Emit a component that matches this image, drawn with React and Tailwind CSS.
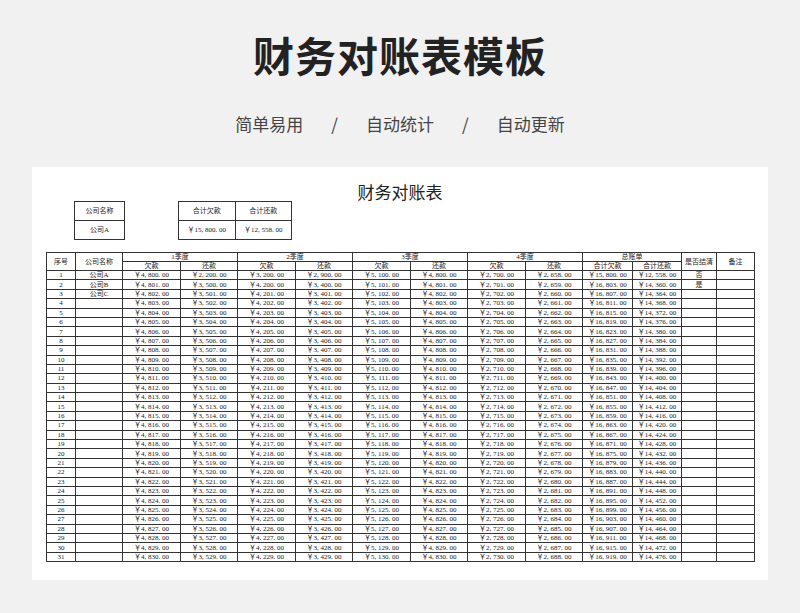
const yen = (n) => "￥" + n.toLocaleString("en-US").replace(",", ", ") + ". 00";

const rows = Array.from({ length: 31 }, (_, k) => {
  const i = k + 1;
  if (i === 1)
    return [1, "公司A", 4800, 2200, 3200, 2900, 5100, 4800, 2700, 2658, 15800, 12558, "否"];
  return [
    i,
    i === 2 ? "公司B" : i === 3 ? "公司C" : "",
    4800 + i - 1,
    3500 + i - 2,
    4200 + i - 2,
    3400 + i - 2,
    5100 + i - 1,
    4800 + i - 1,
    2700 + i - 1,
    2658 + i - 1,
    16803 + 4 * (i - 2),
    14360 + 4 * (i - 2),
    i === 2 ? "是" : "",
  ];
});

const widths = [29, 47, 58, 57, 58, 57, 58, 57, 58, 57, 50, 49, 35, 38];
const td = "border border-[#333] p-0 text-center whitespace-nowrap";

export default function App() {
  return (
    <div
      className="w-[800px] h-[613px] bg-[#f1f1f1] flex flex-col items-center overflow-hidden"
      style={{ fontFamily: '"Noto Sans CJK SC", "Noto Sans", sans-serif' }}
    >
      <h1 className="mt-[26px] text-[41px] leading-[56px] font-bold text-[#222] tracking-[1px]">
        财务对账表模板
      </h1>
      <div className="mt-[30px] flex gap-[28px] text-[17px] leading-[24px] text-[#444]">
        <span>简单易用</span><span>/</span><span>自动统计</span><span>/</span><span>自动更新</span>
      </div>
      <div
        className="mt-[31px] w-[736px] h-[413px] bg-white flex flex-col px-[14px] text-[#222]"
        style={{ fontFamily: '"Liberation Serif", "Noto Sans CJK SC", serif' }}
      >
        <div className="text-center text-[17px] leading-[20px] mt-[17px]">财务对账表</div>
        <div className="flex ml-[28px] mt-[-3px]">
          <table className="border-collapse text-[7px] w-[51px]">
            <tbody>
              <tr><td className={td + " h-[19px]"}>公司名称</td></tr>
              <tr><td className={td + " h-[19px]"}>公司A</td></tr>
            </tbody>
          </table>
          <table className="border-collapse text-[7px] ml-[53px] w-[114px] table-fixed">
            <tbody>
              <tr><td className={td + " h-[19px]"}>合计欠款</td><td className={td}>合计还款</td></tr>
              <tr><td className={td + " h-[19px]"}>{yen(15800)}</td><td className={td}>{yen(12558)}</td></tr>
            </tbody>
          </table>
        </div>
        <table className="mt-[12px] border-collapse table-fixed w-[708px] text-[7px] leading-[8px]">
          <colgroup>
            {widths.map((w, i) => <col key={i} style={{ width: w }} />)}
          </colgroup>
          <tbody>
            <tr className="h-[8px]">
              <td className={td} rowSpan={2}>序号</td>
              <td className={td} rowSpan={2}>公司名称</td>
              <td className={td} colSpan={2}>1季度</td>
              <td className={td} colSpan={2}>2季度</td>
              <td className={td} colSpan={2}>3季度</td>
              <td className={td} colSpan={2}>4季度</td>
              <td className={td} colSpan={2}>总账单</td>
              <td className={td} rowSpan={2}>是否结清</td>
              <td className={td} rowSpan={2}>备注</td>
            </tr>
            <tr className="h-[8px]">
              {["欠款", "还款", "欠款", "还款", "欠款", "还款", "欠款", "还款", "合计欠款", "合计还款"].map((t, i) => (
                <td key={i} className={td}>{t}</td>
              ))}
            </tr>
            {rows.map((r) => (
              <tr key={r[0]} className="h-[9.4px]">
                {r.map((c, j) => (
                  <td key={j} className={td}>
                    {j >= 2 && j <= 11 ? yen(c) : c}
                  </td>
                ))}
                <td className={td}></td>
              </tr>
            ))}
          </tbody>
        </table>
      </div>
    </div>
  );
}
